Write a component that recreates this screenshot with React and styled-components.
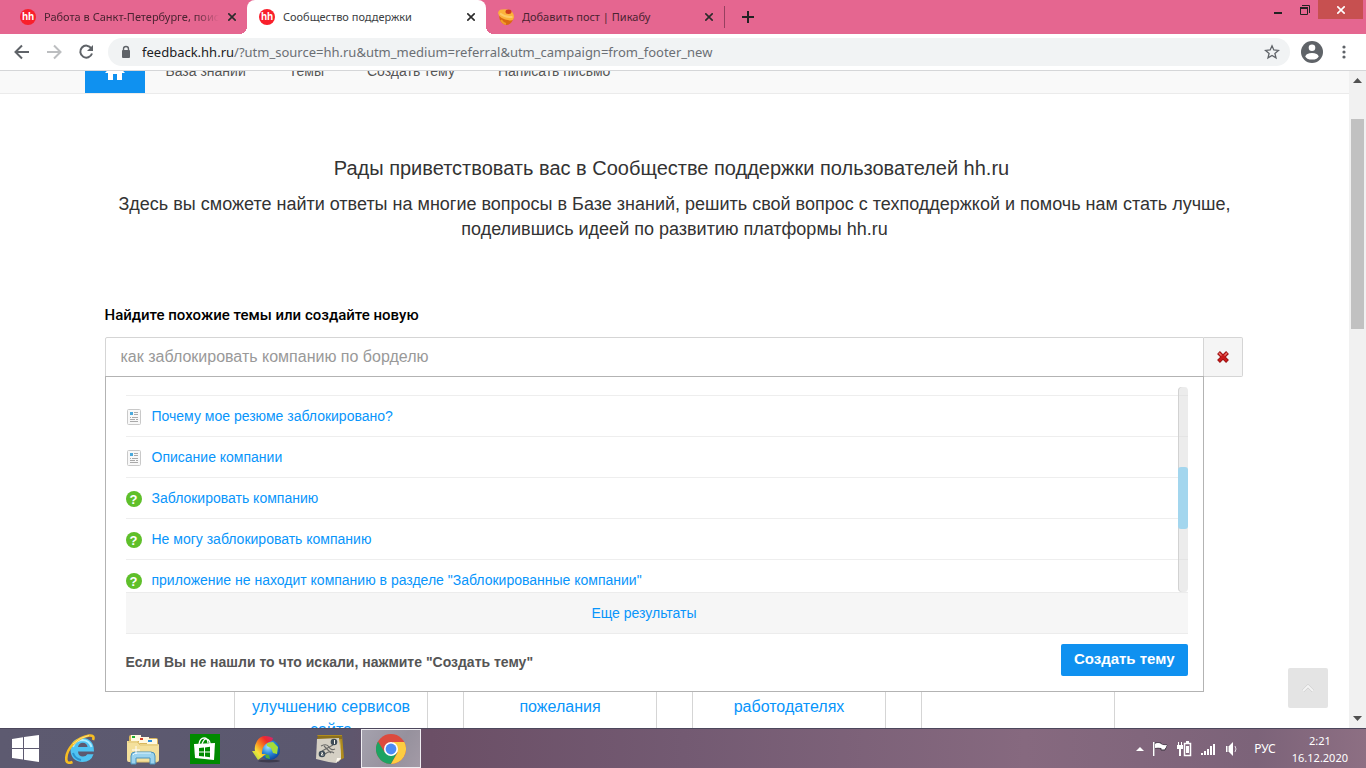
import React from 'react';
import styled, { createGlobalStyle, css } from 'styled-components';

const ui = '"Noto Sans", "Open Sans", sans-serif';
const arial = '"Liberation Sans", Arial, sans-serif';

const Global = createGlobalStyle`
  * { box-sizing: border-box; }
  body { margin: 0; background: #fff; font-family: ${arial}; }
  button { border: 0; padding: 0; background: none; font: inherit; color: inherit; cursor: pointer; }
  a { color: #0895fb; text-decoration: none; }
  svg { display: block; flex: none; }
`;

const Screen = styled.div`
  display: flex;
  flex-direction: column;
  height: 100vh;
  overflow: hidden;
`;

/* Browser frame */
const TabStrip = styled.header`
  display: flex;
  flex: none;
  height: 34px;
  padding-left: 8px;
  background: #e56690;
  font-family: ${ui};
  font-size: 11px;
  color: #4a2331;
`;

const Tab = styled.div`
  position: relative;
  display: flex;
  align-items: center;
  gap: 8px;
  flex: 0 1 239px;
  min-width: 0;
  padding: 0 10px 0 12px;
  ${(p) => p.$active && css`
    background: #fff;
    color: #3c4043;
    border-radius: 8px 8px 0 0;
    &::before, &::after {
      content: '';
      position: absolute;
      bottom: 0;
      width: 8px;
      height: 8px;
    }
    &::before { right: 100%; background: radial-gradient(circle at 0 0, transparent 8px, #fff 8px); }
    &::after { left: 100%; background: radial-gradient(circle at 100% 0, transparent 8px, #fff 8px); }
  `}
  ${(p) => p.$divided && css`border-right: 1px solid #a8486a; border-image: linear-gradient(transparent 20%, #96405f 20%, #96405f 80%, transparent 80%) 1;`}
`;

const TabTitle = styled.span`
  flex: 1;
  overflow: hidden;
  white-space: nowrap;
  line-height: 18px;
  ${(p) => p.$fade && css`mask-image: linear-gradient(to right, #000 86%, transparent);`}
`;

const Favicon = styled.span`
  flex: none;
  width: 16px;
  height: 16px;
  border-radius: 50%;
  background: #f91f2b;
  color: #fff;
  font: 700 10px/15px ${arial};
  text-align: center;
`;

const PlainButton = styled.button`
  display: flex;
  align-items: center;
  justify-content: center;
  flex: none;
  width: ${(p) => p.$w || 10}px;
`;

const WindowControls = styled.div`
  display: flex;
  align-items: flex-start;
  margin-left: auto;
  padding-right: 3px;
`;

const WindowButton = styled.button`
  display: flex;
  align-items: center;
  justify-content: center;
  width: ${(p) => (p.$close ? 45 : 27)}px;
  height: 19px;
  background: ${(p) => (p.$close ? '#c75050' : 'transparent')};
`;

const Toolbar = styled.div`
  display: flex;
  align-items: center;
  flex: none;
  height: 37px;
  padding: 0 4px 0 6px;
  border-bottom: 1px solid #d5d6d8;
  color: #5f6368;
`;

const Omnibox = styled.div`
  display: flex;
  align-items: center;
  flex: 1;
  gap: 10px;
  height: 28px;
  margin: 0 8px 0 6px;
  padding: 0 10px 0 12px;
  border-radius: 14px;
  background: #f1f3f4;
`;

const Address = styled.div`
  flex: 1;
  font: 13px/20px ${ui};
  color: #6b6f74;
  white-space: nowrap;
  overflow: hidden;
  b { font-weight: 400; color: #202124; }
`;

const Viewport = styled.div`
  display: flex;
  flex: 1;
  min-height: 0;
`;

const Page = styled.main`
  position: relative;
  flex: 1;
  min-width: 0;
  overflow: hidden;
`;

const Scrollbar = styled.div`
  display: flex;
  flex-direction: column;
  align-items: center;
  justify-content: space-between;
  width: 17px;
  padding: 7px 0;
  background: #f1f1f1;
`;

const ScrollTrack = styled.div`
  flex: 1;
  width: 13px;
  padding-top: 36px;
`;

const ScrollThumb = styled.div`
  height: 210px;
  background: #c1c1c1;
`;

/* Site */
const Container = styled.div`
  max-width: 1180px;
  margin: 0 auto;
`;

const NavBar = styled.div`
  height: 23px;
  overflow: hidden;
  background: #f9f9f9;
  border-bottom: 1px solid #ebebeb;
`;

const Nav = styled.nav`
  display: flex;
  align-items: flex-end;
  height: 22px;
`;

const HomeLink = styled.a`
  display: flex;
  align-items: flex-end;
  justify-content: center;
  width: 60px;
  height: 22px;
  padding-bottom: 13px;
  background: #0f91f0;
`;

const NavLink = styled.a`
  padding: 0 22px 13px 21px;
  font-size: 14px;
  line-height: 18px;
  color: #555;
`;

const Intro = styled.section`
  padding: 62px 20px 0;
  text-align: center;
  color: #333;
`;

const Title = styled.h1`
  margin: 0 6px 12px 0;
  font-size: 20px;
  font-weight: 400;
  line-height: 24px;
`;

const Lead = styled.p`
  margin: 0;
  font-size: 18px;
  line-height: 25px;
`;

const Search = styled.form`
  position: relative;
  margin: 63px 22px 0 20px;
`;

const SearchLabel = styled.label`
  display: block;
  margin-bottom: 12px;
  font: 500 15px/20px Roboto, sans-serif;
  color: #000;
`;

const SearchRow = styled.div`
  display: flex;
  height: 40px;
`;

const SearchInput = styled.input`
  flex: 1;
  min-width: 0;
  padding: 0 15px;
  border: 1px solid #d5d5d5;
  border-radius: 2px 0 0 0;
  font: 16px/20px ${arial};
  color: #999;
  outline: 0;
`;

const ClearButton = styled.button`
  display: flex;
  align-items: center;
  justify-content: center;
  width: 39px;
  border: 1px solid #d5d5d5;
  border-left: 0;
  border-radius: 0 2px 2px 0;
  background: #f5f5f5;
`;

const Dropdown = styled.div`
  position: absolute;
  z-index: 2;
  top: 71px;
  left: 0;
  right: 39px;
  padding: 10px 15px 15px 20px;
  border: 1px solid #b3b3b3;
  background: #fff;
  font-size: 14px;
`;

const ResultBox = styled.div`
  position: relative;
  height: 205px;
  overflow: hidden;
  padding-top: 8px;
`;

const ResultList = styled.ul`
  margin: 0;
  padding: 0;
  list-style: none;
`;

const Result = styled.li`
  display: flex;
  align-items: center;
  gap: 10px;
  height: 41px;
  border-top: 1px solid #eee;
  line-height: 20px;
`;

const ResultMark = styled.span`
  width: 16px;
  height: 16px;
  margin-top: 2px;
  border-radius: 50%;
  color: #fff;
  font: 700 13px/17px ${arial};
  text-align: center;
  ${(p) => p.$question && css`background: #5fbf2a;`}
`;

const ListTrack = styled.div`
  position: absolute;
  top: 0;
  right: 0;
  width: 10px;
  height: 205px;
  padding-top: 80px;
  border-radius: 4px;
  background: rgba(221, 221, 221, 0.55);
  box-shadow: inset 1px 0 0 #d2d2d2;
`;

const ListThumb = styled.div`
  height: 62px;
  border-radius: 3px;
  background: #a3d6ee;
`;

const MoreLink = styled.a`
  display: block;
  padding-right: 25px;
  border: solid #ececec;
  border-width: 1px 0;
  background: #f6f6f6;
  line-height: 40px;
  text-align: center;
`;

const DropdownFooter = styled.div`
  display: flex;
  align-items: center;
  justify-content: space-between;
  padding-top: 10px;
  font-weight: 700;
  color: #555;
`;

const Hint = styled.span`
  padding-top: 4px;
`;

const CreateButton = styled.button`
  height: 32px;
  padding: 0 13px 3px;
  border-radius: 2px;
  background: #0f91f0;
  color: #fff;
  font-size: 15px;
  font-weight: 700;
`;

const Cards = styled.section`
  display: grid;
  grid-template-columns: repeat(4, 194px);
  justify-content: center;
  gap: 35px;
  padding-top: 100px;
`;

const Card = styled.a`
  height: 320px;
  padding: 194px 10px 0;
  border: 1px solid #d5d5d5;
  font-size: 16px;
  line-height: 23px;
  text-align: center;
`;

const ToTop = styled.button`
  position: absolute;
  right: 21px;
  bottom: 20px;
  display: flex;
  align-items: center;
  justify-content: center;
  width: 40px;
  height: 40px;
  border-radius: 2px;
  background: #e4e4e4;
`;

/* Desktop taskbar */
const Taskbar = styled.footer`
  display: flex;
  flex: none;
  height: 40px;
  border-top: 1px solid #4c475c;
  background: linear-gradient(to right, #5d5a70 0, #5b586f 330px, #6b4f66 430px, #735a72 50%, #86697f 75%, #7c6379 92%, #8d6f83 100%);
  color: #fff;
`;

const TaskButton = styled.button`
  display: flex;
  align-items: center;
  justify-content: center;
  width: ${(p) => (p.$start ? 50 : 60)}px;
  margin-right: ${(p) => (p.$start ? 1 : 2)}px;
  ${(p) => p.$active && css`
    border: 1px solid #efedf1;
    background: linear-gradient(120deg, #a5a2ae, #96919d 60%, #a39aa6);
  `}
`;

const Tray = styled.div`
  display: flex;
  align-items: center;
  gap: 8px;
  margin-left: auto;
  padding-right: 18px;
  font: 11px/17px ${ui};
`;

const Language = styled.span`
  margin: 0 8px 0 6px;
  font-size: 12px;
`;

const Clock = styled.time`
  text-align: center;
`;

const Cross = ({ color = '#2b2b2b' }) => (
  <svg width="8" height="8" viewBox="0 0 8 8" stroke={color} strokeWidth="1.600">
    <path d="M.3 .3l7.400 7.400M7.700 .3l-7.400 7.400" />
  </svg>
);

const PikabuIcon = () => (
  <svg width="16" height="16" viewBox="0 0 16 16">
    <path d="M1 7Q2 15 8 16q6-.5 7.500-7z" fill="#d9690f" />
    <path d="M3 11q2 3.500 5 4" stroke="#f09a2a" strokeWidth="2" fill="none" />
    <path d="M0 4Q1 0 4 .5 8 0 12 1q4 3 4 7-.5 4-4 3.500Q1 10 0 4z" fill="#fbb23a" />
    <path d="M2 4.500q5 4 12.500 3.500" stroke="#fccb68" strokeWidth="2" fill="none" />
    <ellipse cx="10.500" cy="2.800" rx="3" ry="2.200" fill="#d0401c" />
  </svg>
);

const BackIcon = ({ color, flip }) => (
  <svg width="16" height="16" viewBox="0 0 16 16" fill="none" stroke={color} strokeWidth="2">
    <path d={flip ? 'M1 8h13M8 1.500L14.500 8 8 14.500' : 'M15 8H2M8 1.500L1.500 8 8 14.500'} />
  </svg>
);

const ReloadIcon = () => (
  <svg width="16" height="16" viewBox="0 0 16 16">
    <path d="M13.300 4.300A6 6 0 1 0 14 9.500" fill="none" stroke="#5f6368" strokeWidth="2" />
    <path d="M15 1v6H9z" fill="#5f6368" />
  </svg>
);

const LockIcon = () => (
  <svg width="12" height="14" viewBox="0 0 12 14">
    <path d="M3.500 6V4a2.500 2.500 0 0 1 5 0V6" fill="none" stroke="#5f6368" strokeWidth="1.400" />
    <rect x="2" y="5" width="8" height="8" rx="1" fill="#5f6368" />
  </svg>
);

const StarIcon = () => (
  <svg width="16" height="16" viewBox="0 0 16 16">
    <path d="M8 1.800l1.800 4.200 4.600.4-3.500 3 1.100 4.500L8 11.500l-4 2.400 1.100-4.500-3.500-3L6.200 6z" fill="none" stroke="#5f6368" strokeWidth="1.300" />
  </svg>
);

const AvatarIcon = () => (
  <svg width="22" height="22" viewBox="0 0 22 22">
    <circle cx="11" cy="11" r="11" fill="#5f6368" />
    <circle cx="11" cy="6.800" r="3.300" fill="#fff" />
    <ellipse cx="11" cy="15.300" rx="6.500" ry="3.300" fill="#fff" />
  </svg>
);

const HomeIcon = () => (
  <svg width="20" height="18" viewBox="0 0 20 18" fill="#fff">
    <path d="M10 0L0 11h3v7h5v-6h4v6h5v-7h3z" />
  </svg>
);

const RedCross = () => (
  <svg width="14" height="14" viewBox="0 0 14 14">
    <path d="M2.500 2.500l9 9M11.500 2.500l-9 9" stroke="#8f1010" strokeWidth="4" />
    <path d="M3 3l8 8M11 3l-8 8" stroke="#c81a1a" strokeWidth="2.600" />
    <path d="M3 3l2.500 2.500M11 3l-2.500 2.500" stroke="#ea7470" strokeWidth="1.400" />
  </svg>
);

const DocIcon = () => (
  <svg width="16" height="16" viewBox="0 0 16 16">
    <rect x="1.500" y=".5" width="13" height="15" rx="1" fill="#f8f8f8" stroke="#c9c9c9" />
    <rect x="4" y="3" width="3" height="3" fill="#4aa9dc" />
    <path d="M8 3.500h4M8 5.500h4M4 8.500h1M6 8.500h6M4 10.500h5M10 10.500h2M4 12.500h8" stroke="#a9a9a9" />
  </svg>
);

const Triangle = ({ down }) => (
  <svg width="9" height="5" viewBox="0 0 9 5" fill="#505050">
    <path d={down ? 'M0 0h9L4.500 5z' : 'M0 5h9L4.500 0z'} />
  </svg>
);

const WindowsIcon = () => (
  <svg width="27" height="27" viewBox="0 0 27 27" fill="#fff">
    <path d="M0 4l11-1.700V13H0zM12 2.100L27 0v13H12zM0 14h11v10.500L0 23zM12 14h15v13l-15-2.200z" />
  </svg>
);

const ExplorerBrowserIcon = () => (
  <svg width="32" height="32" viewBox="0 0 32 32">
    <path d="M29 18.500H13q.3 5 5 5 3 0 4.300-2.300h6.200Q26 29 17.500 29 6 28.500 5.500 17 6 5 17.500 5 29 5.500 29 18.500zM13 14h9.500q-.5-4-4.700-4.200Q13.700 10 13 14z" fill="#4fc3f2" />
    <path d="M8 14q2-7 9.500-7 7 .5 9 7" fill="none" stroke="#b0ecff" strokeWidth="2" />
    <path d="M8 20q2 6 8 7" fill="none" stroke="#2b93cf" strokeWidth="2" />
    <path d="M28 7Q30 2 24 2.500 15 4 8 11 0 20 1.500 28q1 3 6 1" fill="none" stroke="#f7bd22" strokeWidth="2.600" />
    <path d="M24 2.500Q15 4 8 11" fill="none" stroke="#fde48a" strokeWidth="1" />
  </svg>
);

const FolderIcon = () => (
  <svg width="34" height="32" viewBox="0 0 34 32">
    <path d="M3 4q0-2 2-2h9l2 3h14q2 0 2 2v20H3z" fill="#d9b65c" />
    <rect x="5" y="2" width="10" height="6" fill="#fff8e0" />
    <rect x="6" y="3" width="3" height="2" fill="#1fae2f" />
    <rect x="13" y="4" width="10" height="6" fill="#fff8e0" />
    <rect x="14" y="5" width="3" height="2" fill="#d8432a" />
    <rect x="21" y="6" width="10" height="6" fill="#fff8e0" />
    <rect x="22" y="7" width="4" height="2" fill="#2b8fdc" />
    <path d="M1 8h10l3 3h18q1 0 1 1v15q0 2-2 2H3q-2 0-2-2z" fill="#f4e09c" />
    <path d="M2 9h9l3 3h18M4 29h27" fill="none" stroke="#e0c470" />
    <path d="M5 31v-8q0-4 4-4h16q4 0 4 4v8h-5v-6H10v6z" fill="#9bd3ee" stroke="#4b93bd" />
    <path d="M7 22q1-2 4-2h14" stroke="#e1f7ff" fill="none" />
    <path d="M10 13v8M6 17h8" stroke="#fff" strokeWidth="1" />
  </svg>
);

const StoreIcon = () => (
  <svg width="30" height="30" viewBox="0 0 30 30">
    <rect width="30" height="30" fill="#008a00" />
    <path d="M4 10l21-1-1 17-19-2z" fill="#fff" />
    <path d="M9 10Q10 4 14 4t4 5M12 10q2-6 5-5 3 1 3 5" fill="none" stroke="#fff" strokeWidth="1.300" />
    <path d="M9 14l5-.5v4H9zM15 13.400l5-.6v4.700h-5zM9 18.500h5v4L9 22zM15 18.500h5v4.700l-5-.6z" fill="#008a00" />
  </svg>
);

const DownloadGlobeIcon = () => (
  <svg width="30" height="30" viewBox="0 0 30 30">
    <defs>
      <linearGradient id="rainbow" x1="1" y1="0" x2="0" y2="1">
        <stop offset="0" stopColor="#d0247c" />
        <stop offset=".25" stopColor="#ee2b2b" />
        <stop offset=".5" stopColor="#f98a1e" />
        <stop offset=".7" stopColor="#f8e23a" />
        <stop offset="1" stopColor="#8fdc3c" />
      </linearGradient>
      <radialGradient id="ocean" cx=".4" cy=".35" r=".7">
        <stop offset="0" stopColor="#a5e2ff" />
        <stop offset=".45" stopColor="#2f8fe0" />
        <stop offset="1" stopColor="#0a3f96" />
      </radialGradient>
    </defs>
    <ellipse cx="17" cy="27" rx="11" ry="1.500" fill="#3f3c4e" />
    <circle cx="18" cy="16" r="10" fill="url(#ocean)" />
    <path d="M15 9l6-1 5 5-1 7-4-1-2-5-4-2z" fill="#a4dc3a" />
    <path d="M13 20l4 1 1 4-4-1z" fill="#4fae3c" />
    <path d="M21 4Q10-1 5 7 2 12 3 17H0l6 9 8-6h-4q-1-10 10-13z" fill="url(#rainbow)" />
  </svg>
);

const MapIcon = () => (
  <svg width="32" height="32" viewBox="0 0 32 32">
    <path d="M4 2l25 0 2 23-8 4z" fill="#b08c1c" />
    <path d="M5 3h24v3H4z" fill="#8b6f1e" />
    <path d="M27 6l1 20-3 3z" fill="#eee8d8" />
    <path d="M4 6l22-1 2 20-5 5q-9-1-20-4z" fill="#d5d0c4" />
    <path d="M23 30l1-5 4 0z" fill="#fffaf0" />
    <path d="M8 13q6-3 8 1t6 2M9 18l11-6M11 13l7 7M12 21q5-4 9-1" fill="none" stroke="#6a6a68" strokeWidth="1.100" />
    <circle cx="21" cy="9" r="3.300" fill="#3e4c58" />
    <circle cx="9" cy="21" r="3.300" fill="#3e4c58" />
    <path d="M21.500 7v4M8 20h2l-2 2h2.500" stroke="#f4f2ea" fill="none" />
  </svg>
);

const ChromeIcon = () => (
  <svg width="30" height="30" viewBox="0 0 30 30">
    <circle cx="15" cy="15" r="15" fill="#dd4b3e" />
    <path d="M2 7.500A15 15 0 0 0 15 30l6.200-11.500L15 15l-6.200 3.500z" fill="#1da362" />
    <path d="M28.300 8A15 15 0 0 1 15 30l6.500-11.300L17 8z" fill="#fdcd41" />
    <circle cx="15" cy="15" r="7" fill="#fff" />
    <circle cx="15" cy="15" r="5.400" fill="#4c8bf5" />
  </svg>
);

const TrayIcon = ({ children, w = 16 }) => (
  <svg width={w} height="16" viewBox={`0 0 ${w} 16`} fill="#fff">{children}</svg>
);

const results = [
  { text: 'Почему мое резюме заблокировано?', doc: true },
  { text: 'Описание компании', doc: true },
  { text: 'Заблокировать компанию' },
  { text: 'Не могу заблокировать компанию' },
  { text: 'приложение не находит компанию в разделе "Заблокированные компании"' },
];

const cards = ['Предложения по улучшению сервисов сайта', 'Благодарности и пожелания', 'Отзывы о работодателях', ''];

const CloseTab = () => (
  <PlainButton aria-label="Закрыть вкладку"><Cross /></PlainButton>
);

export default function App() {
  return (
    <Screen>
      <Global />
      <TabStrip>
        <Tab>
          <Favicon>hh</Favicon>
          <TabTitle $fade>Работа в Санкт-Петербурге, поиск</TabTitle>
          <CloseTab />
        </Tab>
        <Tab $active>
          <Favicon>hh</Favicon>
          <TabTitle>Сообщество поддержки</TabTitle>
          <CloseTab />
        </Tab>
        <Tab $divided>
          <PikabuIcon />
          <TabTitle>Добавить пост | Пикабу</TabTitle>
          <CloseTab />
        </Tab>
        <PlainButton $w={46} aria-label="Новая вкладка">
          <svg width="12" height="12" viewBox="0 0 12 12" stroke="#222" strokeWidth="2"><path d="M6 0v12M0 6h12" /></svg>
        </PlainButton>
        <WindowControls>
          <WindowButton aria-label="Свернуть">
            <svg width="8" height="10" viewBox="0 0 8 10"><rect y="7" width="8" height="2" fill="#222" /></svg>
          </WindowButton>
          <WindowButton aria-label="Восстановить">
            <svg width="10" height="10" viewBox="0 0 10 10" fill="none" stroke="#222">
              <path d="M2 .5h7.500V8M.5 3v6.500h7V3z" /><path d="M0 3h8" strokeWidth="2" />
            </svg>
          </WindowButton>
          <WindowButton $close aria-label="Закрыть"><Cross color="#fff" /></WindowButton>
        </WindowControls>
      </TabStrip>

      <Toolbar>
        <PlainButton $w={32} aria-label="Назад"><BackIcon color="#5f6368" /></PlainButton>
        <PlainButton $w={32} aria-label="Вперёд"><BackIcon color="#bcbec0" flip /></PlainButton>
        <PlainButton $w={32} aria-label="Обновить"><ReloadIcon /></PlainButton>
        <Omnibox>
          <LockIcon />
          <Address><b>feedback.hh.ru</b>/?utm_source=hh.ru&amp;utm_medium=referral&amp;utm_campaign=from_footer_new</Address>
          <PlainButton $w={16} aria-label="В закладки"><StarIcon /></PlainButton>
        </Omnibox>
        <PlainButton $w={28} aria-label="Профиль"><AvatarIcon /></PlainButton>
        <PlainButton $w={36} aria-label="Меню">
          <svg width="4" height="14" viewBox="0 0 4 14" fill="#5f6368"><circle cx="2" cy="2" r="1.600" /><circle cx="2" cy="7" r="1.600" /><circle cx="2" cy="12" r="1.600" /></svg>
        </PlainButton>
      </Toolbar>

      <Viewport>
        <Page>
          <NavBar>
            <Container>
              <Nav>
                <HomeLink href="#" aria-label="Главная"><HomeIcon /></HomeLink>
                <NavLink href="#">База знаний</NavLink>
                <NavLink href="#">Темы</NavLink>
                <NavLink href="#">Создать тему</NavLink>
                <NavLink href="#">Написать письмо</NavLink>
              </Nav>
            </Container>
          </NavBar>
          <Container>
            <Intro>
              <Title>Рады приветствовать вас в Сообществе поддержки пользователей hh.ru</Title>
              <Lead>Здесь вы сможете найти ответы на многие вопросы в Базе знаний, решить свой вопрос с техподдержкой и помочь нам стать лучше, поделившись идеей по развитию платформы hh.ru</Lead>
            </Intro>
            <Search onSubmit={(e) => e.preventDefault()}>
              <SearchLabel htmlFor="query">Найдите похожие темы или создайте новую</SearchLabel>
              <SearchRow>
                <SearchInput id="query" defaultValue="как заблокировать компанию по борделю" />
                <ClearButton type="button" aria-label="Очистить"><RedCross /></ClearButton>
              </SearchRow>
              <Dropdown>
                <ResultBox>
                  <ResultList>
                    {results.map((r) => (
                      <Result key={r.text}>
                        <ResultMark $question={!r.doc}>{r.doc ? <DocIcon /> : '?'}</ResultMark>
                        <a href="#">{r.text}</a>
                      </Result>
                    ))}
                  </ResultList>
                  <ListTrack><ListThumb /></ListTrack>
                </ResultBox>
                <MoreLink href="#">Еще результаты</MoreLink>
                <DropdownFooter>
                  <Hint>Если Вы не нашли то что искали, нажмите "Создать тему"</Hint>
                  <CreateButton type="submit">Создать тему</CreateButton>
                </DropdownFooter>
              </Dropdown>
            </Search>
            <Cards>
              {cards.map((text, i) => <Card href="#" key={i}>{text}</Card>)}
            </Cards>
          </Container>
          <ToTop aria-label="Наверх">
            <svg width="12" height="8" viewBox="0 0 12 8" fill="none">
              <path d="M1 7l5-5 5 5" stroke="#c9c9c9" strokeWidth="3" /><path d="M1 7l5-5 5 5" stroke="#f4f4f4" strokeWidth="2" />
            </svg>
          </ToTop>
        </Page>
        <Scrollbar>
          <Triangle />
          <ScrollTrack><ScrollThumb /></ScrollTrack>
          <Triangle down />
        </Scrollbar>
      </Viewport>

      <Taskbar>
        <TaskButton $start aria-label="Пуск"><WindowsIcon /></TaskButton>
        <TaskButton aria-label="Internet Explorer"><ExplorerBrowserIcon /></TaskButton>
        <TaskButton aria-label="Проводник"><FolderIcon /></TaskButton>
        <TaskButton aria-label="Магазин"><StoreIcon /></TaskButton>
        <TaskButton aria-label="Загрузки"><DownloadGlobeIcon /></TaskButton>
        <TaskButton aria-label="Карты"><MapIcon /></TaskButton>
        <TaskButton $active aria-label="Chrome"><ChromeIcon /></TaskButton>
        <Tray>
          <TrayIcon w={8}><path d="M0 10h8L4 6z" /></TrayIcon>
          <TrayIcon>
            <path d="M2 1v14M3 2h6v5H3zM9 4h6l-2 5H9z" stroke="#37303c" strokeWidth="1" />
            <path d="M1 1h1.500v14H1zM3 3q3-2 6 0 3 2 6 1-1 3-3 4-2 0-3-1-3-1-6 0z" />
          </TrayIcon>
          <TrayIcon>
            <path d="M2 1h1v3H2zM5 1h1v3H5zM1 4h6v4H1zM3 8h2v7H3z" />
            <rect x="8.500" y="2.500" width="6" height="12" fill="none" stroke="#fff" strokeWidth="1.500" />
            <path d="M10 5h3v7h-3zM10 0h3v2h-3z" />
          </TrayIcon>
          <TrayIcon><path d="M1 12h2v2H1zM4 10h2v4H4zM7 8h2v6H7zM10 5h2v9h-2zM13 3h2v11h-2z" /></TrayIcon>
          <TrayIcon>
            <path d="M2 5h3l4-4v14l-4-4H2z" />
            <path d="M4 4v8" stroke="#6f586d" />
            <path d="M11 5q2 3 0 6" fill="none" stroke="#e4dbe3" />
          </TrayIcon>
          <Language>РУС</Language>
          <Clock>2:21<br />16.12.2020</Clock>
        </Tray>
      </Taskbar>
    </Screen>
  );
}
